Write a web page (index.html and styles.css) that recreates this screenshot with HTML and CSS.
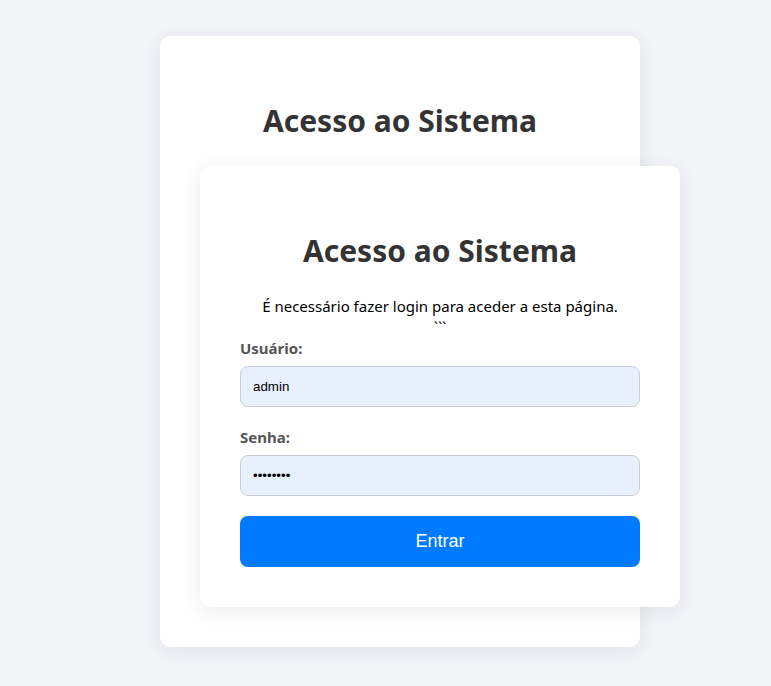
FILE: index.html
```html
<!DOCTYPE html>
<html lang="pt">
<head>
<meta charset="utf-8">
<title>Acesso ao Sistema</title>
<link rel="stylesheet" href="styles.css">
</head>
<body>
<div class="page">
  <div class="card">
    <h2 class="title">Acesso ao Sistema</h2>
    <div class="card">
      <h2 class="title">Acesso ao Sistema</h2>
      <p class="notice">É necessário fazer login para aceder a esta página.</p>
      <div class="stray">```</div>
      <form class="form">
        <div class="field">
          <label class="label" for="u">Usuário:</label>
          <input class="input" id="u" type="text" value="admin">
        </div>
        <div class="field">
          <label class="label" for="p">Senha:</label>
          <input class="input" id="p" type="password" value="admin123">
        </div>
        <button class="btn" type="button">Entrar</button>
      </form>
    </div>
  </div>
</div>
</body>
</html>
```

FILE: styles.css
```css
html, body {
  margin: 0;
  padding: 0;
}
body {
  background: #f3f4f8;
  font-family: "Noto Sans", "Open Sans", sans-serif;
  color: #000;
}
.page {
  padding: 36px 0 39px 160px;
}
.card {
  box-sizing: border-box;
  width: 480px;
  padding: 40px;
  background: #fff;
  border-radius: 10px;
  box-shadow: 0 4px 20px rgba(30, 40, 80, 0.09);
}
.title {
  margin: 25px 0;
  font-size: 30px;
  font-weight: 700;
  line-height: 40px;
  color: #333;
  text-align: center;
}
.notice {
  margin: 0;
  font-size: 15px;
  line-height: 21px;
  text-align: center;
}
.stray {
  font-size: 15px;
  line-height: 21px;
  text-align: center;
}
.form {
  display: flex;
  flex-direction: column;
}
.field {
  display: flex;
  flex-direction: column;
  margin-bottom: 20px;
}
.label {
  font-size: 15px;
  line-height: 21px;
  font-weight: 700;
  color: #555;
  margin-bottom: 7px;
}
.input {
  box-sizing: border-box;
  height: 41px;
  padding: 0 12px;
  border: 1px solid #c9ccd4;
  border-radius: 8px;
  background: #e8f0fe;
  font-family: "Liberation Sans", Arial, sans-serif;
  font-size: 13.33px;
  color: #000;
  outline: none;
}
.btn {
  height: 51px;
  border: none;
  border-radius: 8px;
  background: #007bff;
  color: #fff;
  font-family: "Liberation Sans", Arial, sans-serif;
  font-size: 18px;
  cursor: pointer;
}
```
